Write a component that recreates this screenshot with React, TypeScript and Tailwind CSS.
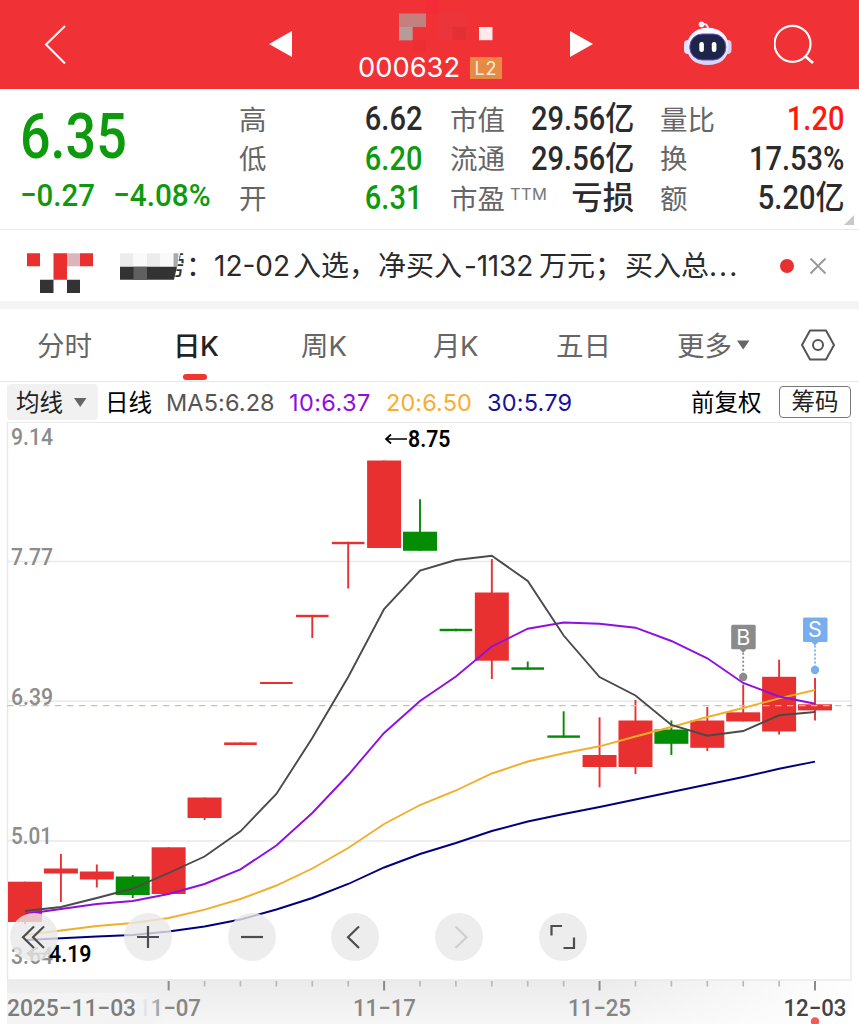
import React from "react";

const CJK = "font-['Roboto','Noto_Sans_CJK_SC',sans-serif]";
const INTER = "font-['Inter','Noto_Sans_CJK_SC',sans-serif]";

const RED = "#e93030";
const GREEN = "#048c04";
const X0 = 25;
const STEP = 35.91;
const cx = (i: number) => X0 + STEP * i;

type Candle = { t: number; b: number; hi?: number; lo?: number; down?: boolean; flat?: boolean };

const candles: Candle[] = [
  { t: 881.7, b: 922, lo: 924 },
  { t: 868.5, b: 873.5, hi: 854, lo: 902 },
  { t: 871.5, b: 879.5, hi: 864.5, lo: 887.5 },
  { t: 876.5, b: 895, hi: 875, lo: 898, down: true },
  { t: 847.3, b: 894 },
  { t: 797.5, b: 818, lo: 820 },
  { t: 742.4, b: 745, flat: true },
  { t: 682, b: 684, flat: true },
  { t: 614.8, b: 617.2, lo: 638, flat: true },
  { t: 541.8, b: 544.2, lo: 588.5, flat: true },
  { t: 460.5, b: 548 },
  { t: 531.7, b: 550.8, hi: 499.3, down: true },
  { t: 628.8, b: 631.2, down: true, flat: true },
  { t: 592.5, b: 660.7, hi: 559, lo: 679 },
  { t: 667.3, b: 669.8, hi: 661.5, down: true, flat: true },
  { t: 735.4, b: 737.8, hi: 711.3, down: true, flat: true },
  { t: 755, b: 767, hi: 717.3, lo: 787.3 },
  { t: 720.5, b: 767, hi: 700, lo: 774 },
  { t: 729.5, b: 743.8, hi: 720.5, lo: 755, down: true },
  { t: 720.5, b: 747.8, hi: 707, lo: 751 },
  { t: 712.3, b: 721.5, hi: 684.5 },
  { t: 676.8, b: 731.5, hi: 659.7, lo: 734.5 },
  { t: 704.3, b: 710.4, hi: 678, lo: 720.5 },
];

const averages: { color: string; ys: number[] }[] = [
  { color: "#00007f", ys: [940, 938.3, 936.5, 935, 931.5, 926.5, 919.5, 909.5, 898, 884, 867.5, 854, 843, 831, 821.5, 814, 807, 799.5, 792, 784.5, 777, 768.8, 761.6] },
  { color: "#f2ae2b", ys: [935, 930.5, 926, 923, 918, 909.6, 899, 885.5, 868.5, 848, 824, 805, 790.5, 773.5, 761.5, 753.3, 746.3, 736.5, 727, 717, 708, 698.3, 690] },
  { color: "#8e0fe0", ys: [914, 909, 904, 901, 894, 884, 869.3, 845.5, 813, 775, 733, 701, 676.5, 646.5, 628.7, 622.5, 623.8, 627.7, 641, 658.3, 683, 696.5, 703.7] },
  { color: "#4a4a4a", ys: [911, 907, 898, 888.5, 873, 856.5, 831.3, 794, 738, 677, 609, 570.5, 560, 555.7, 581, 635.5, 677, 695.5, 725, 735.7, 731, 715.3, 712] },
];

function Label({ x, y, w, size, fill, children, weight = 400 }: { x: number; y: number; w: number; size: number; fill: string; children: string; weight?: number }) {
  return (
    <text x={x} y={y} textLength={w} lengthAdjust="spacingAndGlyphs" fontSize={size} fill={fill} fontWeight={weight} className={CJK}>
      {children}
    </text>
  );
}

function Marker({ x, y, color, dot, letter }: { x: number; y: number; color: string; dot: number; letter: string }) {
  return (
    <g>
      <rect x={x - 12} y={y} width="24.5" height="24.5" rx="1.5" fill={color} />
      <path d={`M${x - 4} ${y + 24}h8l-4 4z`} fill={color} />
      <path d={`M${x} ${y + 28}V${dot - 3}`} stroke={color} strokeWidth="1.8" strokeDasharray="2 2" />
      <circle cx={x} cy={dot} r="4.2" fill={color} />
      <text x={x} y={y + 19.8} textAnchor="middle" fontSize="21.5" fill="#fff" className={INTER}>{letter}</text>
    </g>
  );
}

function KLineChart() {
  return (
    <svg width="859" height="602" viewBox="0 422 859 602" className="block">
      <defs>
        <linearGradient id="axis" x1="0" y1="0" x2="0" y2="1">
          <stop offset="0" stopColor="#ebebeb" />
          <stop offset="1" stopColor="#f6f6f6" />
        </linearGradient>
        <linearGradient id="fadeLeft" x1="0" y1="0" x2="1" y2="0">
          <stop offset="0" stopColor="#f4f4f4" />
          <stop offset="0.86" stopColor="#f3f3f3" />
          <stop offset="1" stopColor="#f1f1f1" stopOpacity="0" />
        </linearGradient>
        <linearGradient id="fadeRight" x1="0" y1="0" x2="1" y2="0">
          <stop offset="0" stopColor="#fff" stopOpacity="0" />
          <stop offset="1" stopColor="#fff" />
        </linearGradient>
      </defs>
      <rect x="7" y="980" width="852" height="44" fill="url(#axis)" />
      <rect x="600" y="980" width="259" height="44" fill="url(#fadeRight)" />
      <rect x="7.5" y="422.3" width="843.5" height="557.7" fill="#fff" stroke="#e8e8e8" strokeWidth="1.4" />
      {[561.5, 701.3, 841].map((y) => (
        <path key={y} d={`M8 ${y}H851`} stroke="#e9e9e9" strokeWidth="1.4" />
      ))}
      <Label x={11} y={445} w={42} size={23} fill="#8c8c8c" weight={500}>9.14</Label>
      <Label x={11} y={565} w={42} size={23} fill="#8c8c8c" weight={500}>7.77</Label>
      <Label x={11} y={705} w={42} size={23} fill="#8c8c8c" weight={500}>6.39</Label>
      <Label x={11} y={844} w={41} size={23} fill="#8c8c8c" weight={500}>5.01</Label>
      <Label x={11} y={964} w={42} size={23} fill="#8c8c8c" weight={500}>3.64</Label>
      {candles.map((c, i) => {
        const color = c.down ? GREEN : RED;
        const half = c.flat ? 16.3 : 17;
        return (
          <g key={i}>
            <path d={`M${cx(i)} ${c.hi ?? c.t}V${c.lo ?? c.b}`} stroke={color} strokeWidth="1.9" />
            <rect x={cx(i) - half} y={c.t} width={half * 2} height={c.b - c.t} fill={color} />
          </g>
        );
      })}
      <path d="M7 705.6H852" stroke="#cdc299" strokeWidth="1.3" strokeDasharray="6.4 5.6" />
      {averages.map((a) => (
        <polyline key={a.color} points={a.ys.map((y, i) => `${cx(i)},${y}`).join(" ")} fill="none" stroke={a.color} strokeWidth="1.9" />
      ))}
      <Marker x={743.2} y={624.8} color="#8b8b8b" dot={677} letter="B" />
      <Marker x={815} y={617.6} color="#79aeee" dot={670} letter="S" />
      <path d="M407 439H386.5M391 434.5L386 439L391 443.5" fill="none" stroke="#000" strokeWidth="1.7" />
      <Label x={408} y={447} w={42.5} size={23} fill="#000" weight={600}>8.75</Label>
      <path d="M49 953.5H27.5M33 949L27.5 953.5L33 958" fill="none" stroke="#777" strokeWidth="1.6" />
      <Label x={49} y={962} w={42.5} size={23} fill="#000" weight={600}>4.19</Label>

      {candles.slice(5).map((_, k) => {
        const i = k + 5;
        const major = i === 10 || i === 16 || i === 22;
        return <path key={i} d={`M${cx(i)} 981V${major ? 990.5 : 986.5}`} stroke={major ? "#8c8c8c" : "#b9b9b9"} strokeWidth={major ? 2 : 1.7} />;
      })}
      <path d={`M${cx(4)} 981V990.5`} stroke="#8c8c8c" strokeWidth="2" />
      <Label x={138} y={1015.5} w={63} size={23.5} fill="#868686" weight={500}>11−07</Label>
      <rect x="7" y="993" width="157" height="31" fill="url(#fadeLeft)" />
      <Label x={7} y={1015.5} w={129} size={23.5} fill="#7d7d7d" weight={500}>2025−11−03</Label>
      <Label x={353} y={1015.5} w={63} size={23.5} fill="#868686" weight={500}>11−17</Label>
      <Label x={568} y={1015.5} w={63} size={23.5} fill="#868686" weight={500}>11−25</Label>
      <Label x={783.5} y={1015.5} w={63} size={23.5} fill="#444" weight={500}>12−03</Label>
      <circle cx="815" cy="1021.5" r="4.2" fill="#ef5a5a" />
    </svg>
  );
}

const controls: { d: string; faint?: boolean }[] = [
  { d: "M24 13.5L13 24.2L24 35M34 13.5L23 24.2L34 35" },
  { d: "M24 13V35M13 24H35" },
  { d: "M13 24H35" },
  { d: "M28 13.5L17 24.2L28 35" },
  { d: "M20.5 13.5L31.5 24.2L20.5 35", faint: true },
  { d: "M12.5 22.5V13H23M24.5 35H35V24.5" },
];

function Controls() {
  return (
    <div className="absolute left-[10px] top-[491px] flex gap-[55.8px]">
      {controls.map((c, i) => (
        <button key={i} className="size-12 rounded-full bg-[#e8e8e8]/80 first:mr-[10px]">
          <svg width="48" height="48" viewBox="0 0 48 48" fill="none" stroke={c.faint ? "#cfcfcf" : "#4d4d4d"} strokeWidth="2.2">
            <path d={c.d} />
          </svg>
        </button>
      ))}
    </div>
  );
}

function Robot() {
  return (
    <svg width="50" height="46" viewBox="0 0 50 46">
      <defs>
        <linearGradient id="shell" x1="0" y1="0" x2="0" y2="1">
          <stop offset="0" stopColor="#fff" />
          <stop offset="1" stopColor="#d6d4f8" />
        </linearGradient>
      </defs>
      <path d="M25 8C25 4 23 2.7 19.5 3.2" stroke="#efeaff" strokeWidth="2" fill="none" />
      <circle cx="18.5" cy="3.4" r="2.8" fill="#fbeffa" />
      <rect x="1" y="19" width="9" height="14" rx="4" fill="#e4e2fb" />
      <rect x="39.5" y="19" width="9" height="14" rx="4" fill="#d4d1f7" />
      <path d="M24.7 6.8C37 6.8 45.5 14.5 45.5 25.5C45.5 38 37 44 24.7 44C12.5 44 4 38 4 25.5C4 14.5 12.5 6.8 24.7 6.8Z" fill="url(#shell)" />
      <rect x="6.8" y="13" width="36" height="26" rx="12.5" fill="#1d2549" stroke="#6a50c8" strokeWidth="1" />
      <rect x="16.3" y="21" width="4.6" height="10" rx="2.2" fill="#fff" />
      <rect x="28.8" y="21" width="4.6" height="10" rx="2.2" fill="#fff" />
    </svg>
  );
}

function Header() {
  return (
    <header className="flex h-[89px] w-full bg-[#f03136]">
      <svg className="ml-[43px] mt-[24px] flex-none" width="24" height="42" viewBox="0 0 24 42" fill="none" stroke="#fff" strokeWidth="2">
        <path d="M22 2L3 20.5L22 39.5" />
      </svg>
      <svg className="ml-[202px] mt-[31px] flex-none" width="23" height="26" viewBox="0 0 23 26"><path d="M0 13L23 0V26Z" fill="#fff" /></svg>
      <div className="ml-[66px] flex w-[145px] flex-none flex-col">
        <svg width="145" height="53" viewBox="-1 0 145 53">
          <path d="M40 13.5h27v13.500h-13.500v13.500H40z" fill="#c47f7f" />
          <path d="M40 27h13.500v13H40z" fill="#b59c97" />
          <path d="M80 13.500h27v13.500H80z" fill="#ec343b" />
          <path d="M80 27h13.500v13H80z" fill="#ec343b" />
          <path d="M93.500 27h13.500v13H93.500z" fill="#e33034" />
          <path d="M53.500 40h13.500v12H53.500z" fill="#ee2e33" />
          <path d="M67 0h13v13.500H67z" fill="#f62b3a" />
          <rect x="120" y="27" width="13.500" height="13.200" fill="#ffe9e9" />
        </svg>
        <div className="flex h-[30px] items-center whitespace-nowrap">
          <span className={`${INTER} w-[112px] flex-none text-[27.3px] leading-none text-white`}>000632</span>
          <span className={`${INTER} flex h-[22px] w-8 flex-none items-center justify-center bg-[#e68b45] text-[18px] tracking-[1px] text-[#fbe9d5]`}>L2</span>
        </div>
      </div>
      <svg className="ml-[67px] mt-[31px] flex-none" width="23" height="26" viewBox="0 0 23 26"><path d="M23 13L0 0V26Z" fill="#fff" /></svg>
      <div className="ml-[90px] mt-[21px] flex-none"><Robot /></div>
      <svg className="ml-[41px] mt-[24px] flex-none" width="42" height="42" viewBox="0 0 42 42" fill="none" stroke="#fff" strokeWidth="2.2">
        <circle cx="18.500" cy="19.800" r="18" />
        <path d="M31 32L39 39" strokeWidth="2.800" />
      </svg>
    </header>
  );
}

type Stat = [label: string, value: string, color: string, sup?: string];
const columns: { box: string; rows: Stat[] }[] = [
  { box: "w-[183px]", rows: [["高", "6.62", "text-[#2b2b2b]"], ["低", "6.20", "text-[#0d9a0d]"], ["开", "6.31", "text-[#0d9a0d]"]] },
  { box: "ml-[28px] w-[184px]", rows: [["市值", "29.56亿", "text-[#2b2b2b]"], ["流通", "29.56亿", "text-[#2b2b2b]"], ["市盈", "亏损", "text-[#2b2b2b]", "TTM"]] },
  { box: "ml-[26px] w-[184px]", rows: [["量比", "1.20", "text-[#ff1a10]"], ["换", "17.53%", "text-[#2b2b2b]"], ["额", "5.20亿", "text-[#2b2b2b]"]] },
];

function Quote() {
  return (
    <section className={`${CJK} relative flex h-[141px] border-b border-[#e9e9e9]`}>
      <div className="flex w-[239px] flex-none flex-col pl-[20px] text-[#0d9a0d]">
        <div className="mt-[14px] h-[68px] origin-left scale-x-[0.855] text-[63px] font-medium leading-[68px]">6.35</div>
        <div className="mt-[4px] flex h-[40px] whitespace-nowrap text-[32px] font-medium leading-[40px]">
          <span className="w-[93px] flex-none origin-left scale-x-[0.92]">−0.27</span>
          <span className="origin-left scale-x-[0.93]">−4.08%</span>
        </div>
      </div>
      {columns.map((c, i) => (
        <div key={i} className={`${c.box} flex-none pt-[10px]`}>
          {c.rows.map(([label, value, color, sup]) => (
            <div key={label} className="flex h-[39.5px] items-center whitespace-nowrap leading-none">
              <span className="flex-none pt-[3px] text-[27.5px] text-[#666]">{label}</span>
              {sup && <span className={`${INTER} mb-2 ml-[5px] w-9 flex-none text-[16.5px] tracking-[0.3px] text-[#777]`}>{sup}</span>}
              <span className="flex flex-1 justify-end">
                <span className={`${color} origin-right font-medium ${sup ? "text-[32px] scale-x-[0.98]" : "text-[33px] scale-x-[0.88]"}`}>{value}</span>
              </span>
            </div>
          ))}
        </div>
      ))}
      <svg className="absolute bottom-[4px] right-[5px]" width="10" height="10" viewBox="0 0 10 10"><path d="M10 0V10H0Z" fill="#c9c9c9" /></svg>
    </section>
  );
}

function Notice() {
  return (
    <section className={`${INTER} flex h-[71px] items-center whitespace-nowrap text-[28px] leading-none text-[#2b2b2b]`}>
      <svg width="186" height="70" viewBox="0 0.7 186 70" className="flex-none">
        <text x="157" y="45" fontSize="28" fill="#333">榜</text>
        <rect x="120" y="15" width="53" height="40" fill="#fff" />
        <path d="M172 15h10l-8 36h-4z" fill="#fff" />
        <path d="M27 23h13v13H27zM53.500 23H67v26.500H53.500zM80 23h13v13H80z" fill="#ea2f2f" />
        <rect x="67" y="23" width="13" height="13" fill="#dcb4ba" />
        <path d="M40 49.500h13.500v13.300H40zM67 49.500h13v13.300H67z" fill="#333" />
        <path d="M120 23h13.500v13.500H120zM147 23h13v13.500h-13z" fill="#ececec" />
        <path d="M133.500 23H147v13.500h-13.500zM160 23h13.500v13.500H160z" fill="#fafafa" />
        <path d="M173.500 23h5l-1 13.500h-4z" fill="#aaa" />
        <path d="M120 36.500h57l-3 13H120z" fill="#333" />
        <rect x="133.500" y="36.500" width="13.500" height="13" fill="#606060" />
      </svg>
      <span className="w-[28px] flex-none">：</span>
      <span className="w-[79px] flex-none">12-02</span>
      <span className="w-[85px] flex-none">入选，</span>
      <span className="w-[86px] flex-none">净买入</span>
      <span className="w-[75px] flex-none tracking-[-0.2px]">-1132</span>
      <span className="w-[86px] flex-none">万元；</span>
      <span className="w-[155px] flex-none">买入总<span className="tracking-[2px]">...</span></span>
      <span className="size-[14px] flex-none rounded-full bg-[#e93030]" />
      <svg className="ml-[15px] flex-none" width="18" height="18" viewBox="0 0 18 18" stroke="#999" strokeWidth="1.900"><path d="M1.500 1.500L16.500 16.500M16.500 1.500L1.500 16.500" /></svg>
    </section>
  );
}

function Tabs() {
  return (
    <nav className={`${INTER} flex h-[73px] items-center whitespace-nowrap border-b border-[#e6e6e6] text-[27.5px] leading-none text-[#666]`}>
      <span className="ml-[37px] w-[136px] flex-none pt-[3px]">分时</span>
      <span className="relative w-[128px] flex-none pt-[3px] font-medium tracking-[-0.5px] text-[#222]">
        日K
        <i className="absolute left-[10px] top-[44px] h-[6px] w-[24px] rounded-[3px] bg-[#f5332f]" />
      </span>
      <span className="w-[132px] flex-none pt-[3px]">周K</span>
      <span className="w-[123px] flex-none pt-[3px] tracking-[-0.5px]">月K</span>
      <span className="w-[121px] flex-none pt-[3px]">五日</span>
      <span className="flex-none pt-[3px]">更多</span>
      <svg className="ml-[5px] flex-none" width="13" height="10" viewBox="0 0 13 10"><path d="M0 0.500H12.500L6.200 9.500Z" fill="#666" /></svg>
      <svg className="ml-[50px] flex-none" width="36" height="32" viewBox="0 0 36 32" fill="none" stroke="#555" strokeWidth="2">
        <path d="M10 1.500H26L34 16L26 30.500H10L2 16Z" strokeLinejoin="round" />
        <circle cx="18" cy="16" r="5" />
      </svg>
    </nav>
  );
}

function Indicators() {
  return (
    <div className={`${INTER} flex h-[40px] items-center whitespace-nowrap text-[23.5px] leading-none text-black`}>
      <span className="ml-[7px] flex h-[36px] w-[91px] flex-none items-center rounded-[4px] bg-[#f1f1f1] pl-[9px] text-[#222]">
        <span className="pt-[2px]">均线</span>
        <svg className="ml-[11px]" width="13" height="9" viewBox="0 0 13 9"><path d="M0 0H12.500L6.200 9Z" fill="#666" /></svg>
      </span>
      <span className="ml-[7px] w-[61px] flex-none pt-[2px]">日线</span>
      <span className="w-[123px] flex-none pt-px tracking-[0.1px] text-[#555]">MA5:6.28</span>
      <span className="w-[97px] flex-none pt-px tracking-[0.4px] text-[#8e0fe0]">10:6.37</span>
      <span className="w-[101px] flex-none pt-px tracking-[0.1px] text-[#f9ae2e]">20:6.50</span>
      <span className="w-[204px] flex-none pt-px tracking-[0.2px] text-[#14149b]">30:5.79</span>
      <span className="w-[88px] flex-none pt-[2px]">前复权</span>
      <span className="flex h-[32px] w-[72px] flex-none items-center justify-center rounded-[4px] border border-[#777] text-[#222]">筹码</span>
    </div>
  );
}

export default function App() {
  return (
    <main className="flex h-[1024px] w-[859px] flex-col overflow-hidden bg-white">
      <Header />
      <Quote />
      <Notice />
      <div className="h-[8px] flex-none bg-[#f4f4f4]" />
      <Tabs />
      <Indicators />
      <div className="relative flex-none">
        <KLineChart />
        <Controls />
      </div>
    </main>
  );
}
